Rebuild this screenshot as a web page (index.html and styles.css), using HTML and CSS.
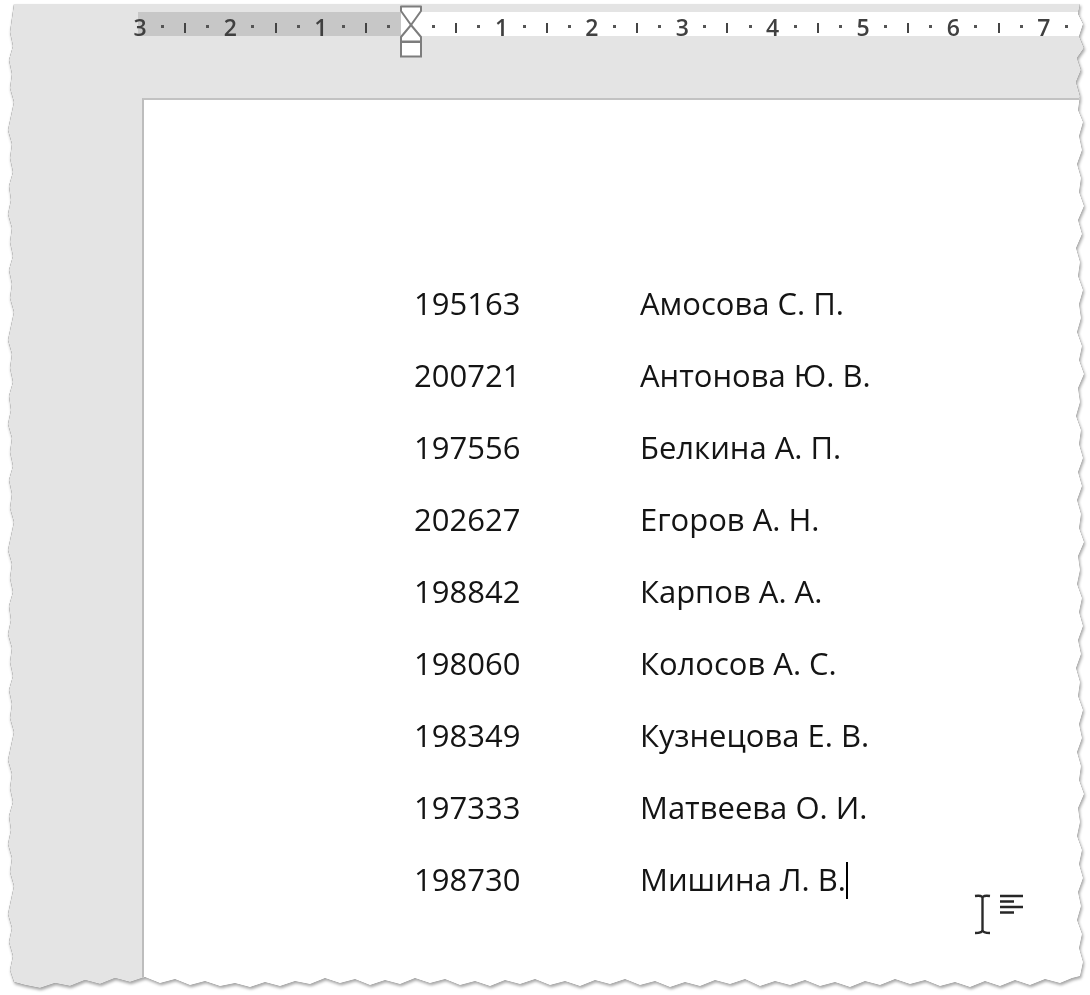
FILE: index.html
```html
<!DOCTYPE html>
<html lang="ru">
<head>
<meta charset="utf-8">
<title>Список</title>
<link rel="stylesheet" href="styles.css">
</head>
<body>
<div class="frame">
  <div class="sheet">
    <div class="ruler">
      <span class="num">3</span><span class="dot"></span><span class="bar"></span><span class="dot"></span>
      <span class="num">2</span><span class="dot"></span><span class="bar"></span><span class="dot"></span>
      <span class="num">1</span><span class="dot"></span><span class="bar"></span><span class="dot"></span>
      <span class="zero"></span><span class="dot"></span><span class="bar"></span><span class="dot"></span>
      <span class="num">1</span><span class="dot"></span><span class="bar"></span><span class="dot"></span>
      <span class="num">2</span><span class="dot"></span><span class="bar"></span><span class="dot"></span>
      <span class="num">3</span><span class="dot"></span><span class="bar"></span><span class="dot"></span>
      <span class="num">4</span><span class="dot"></span><span class="bar"></span><span class="dot"></span>
      <span class="num">5</span><span class="dot"></span><span class="bar"></span><span class="dot"></span>
      <span class="num">6</span><span class="dot"></span><span class="bar"></span><span class="dot"></span>
      <span class="num">7</span><span class="dot"></span>
      <svg class="indent" width="26" height="56" viewBox="0 0 26 56">
        <path d="M2 1.5 H22 V6 L12 20 L2 6 Z" fill="#fff" stroke="#7d7d7d" stroke-width="2" stroke-linejoin="round"/>
        <path d="M12 20 L2 32 V36.5 H22 V32 Z" fill="#fff" stroke="#7d7d7d" stroke-width="2" stroke-linejoin="round"/>
        <rect x="2" y="37" width="20" height="14.5" fill="#fff" stroke="#7d7d7d" stroke-width="2"/>
      </svg>
    </div>
    <div class="page">
      <div class="list">
        <div class="row"><span class="code">195163</span><span class="name">Амосова С. П.</span></div>
        <div class="row"><span class="code">200721</span><span class="name">Антонова Ю. В.</span></div>
        <div class="row"><span class="code">197556</span><span class="name">Белкина А. П.</span></div>
        <div class="row"><span class="code">202627</span><span class="name">Егоров А. Н.</span></div>
        <div class="row"><span class="code">198842</span><span class="name">Карпов А. А.</span></div>
        <div class="row"><span class="code">198060</span><span class="name">Колосов А. С.</span></div>
        <div class="row"><span class="code">198349</span><span class="name">Кузнецова Е. В.</span></div>
        <div class="row"><span class="code">197333</span><span class="name">Матвеева О. И.</span></div>
        <div class="row"><span class="code">198730</span><span class="name">Мишина Л. В.<span class="caret"></span></span></div>
      </div>
      <svg class="pointer" width="54" height="42" viewBox="0 0 54 42">
        <path d="M1 2 Q8.5 1 8.5 4 V36 Q8.5 39 1 39 M16 2 Q8.5 1 8.5 4 M16 39 Q8.5 39 8.5 36" fill="none" stroke="#2a2a2a" stroke-width="2.4"/>
        <g stroke="#262626" stroke-width="2.6">
          <line x1="26" y1="2" x2="49" y2="2"/>
          <line x1="26" y1="7.5" x2="40" y2="7.5"/>
          <line x1="26" y1="13" x2="49" y2="13"/>
          <line x1="26" y1="18.5" x2="40" y2="18.5"/>
        </g>
      </svg>
    </div>
  </div>
</div>
</body>
</html>
```

FILE: styles.css
```css
html, body {
  margin: 0;
  padding: 0;
  background: #ffffff;
}

body {
  width: 1090px;
  height: 995px;
  overflow: hidden;
  font-family: "Open Sans", "Noto Sans", sans-serif;
}

.frame {
  width: 1090px;
  height: 995px;
  filter: drop-shadow(0 0 0.6px #555) drop-shadow(1px 2px 1.5px rgba(0, 0, 0, 0.35));
}

.sheet {
  width: 1090px;
  height: 995px;
  background: #e4e4e4;
  display: flex;
  flex-direction: column;
  clip-path: polygon(
    14px 4px, 1080px 4px,
    1078px 14px, 1083px 24px, 1079px 36px, 1084px 48px, 1077px 58px, 1081px 70px, 1076px 82px, 1080px 96px,
    1078px 110px, 1083px 122px, 1079px 136px, 1082px 150px, 1077px 164px, 1081px 178px, 1079px 192px, 1084px 206px,
    1078px 220px, 1082px 234px, 1076px 248px, 1080px 262px, 1078px 276px, 1083px 290px, 1079px 304px, 1081px 318px,
    1077px 332px, 1082px 346px, 1079px 360px, 1084px 374px, 1078px 388px, 1080px 402px, 1076px 416px, 1081px 430px,
    1079px 444px, 1083px 458px, 1078px 472px, 1082px 486px, 1077px 500px, 1081px 514px, 1079px 528px, 1084px 542px,
    1078px 556px, 1080px 570px, 1077px 584px, 1082px 598px, 1079px 612px, 1083px 626px, 1078px 640px, 1081px 654px,
    1076px 668px, 1080px 682px, 1078px 696px, 1083px 710px, 1079px 724px, 1082px 738px, 1077px 752px, 1081px 766px,
    1079px 780px, 1084px 794px, 1078px 808px, 1080px 822px, 1077px 836px, 1082px 850px, 1079px 864px, 1083px 878px,
    1078px 892px, 1081px 906px, 1077px 920px, 1082px 934px, 1079px 948px, 1083px 962px, 1080px 976px,
    1072px 978px, 1060px 983px, 1045px 979px, 1030px 985px, 1015px 980px, 1000px 986px, 985px 981px, 970px 987px,
    955px 982px, 940px 986px, 925px 980px, 910px 984px, 895px 979px, 880px 985px, 865px 981px, 850px 987px,
    835px 982px, 820px 986px, 805px 980px, 790px 985px, 775px 981px, 760px 986px, 745px 979px, 730px 984px,
    715px 980px, 700px 986px, 685px 982px, 670px 987px, 655px 981px, 640px 985px, 625px 979px, 610px 984px,
    595px 980px, 580px 986px, 565px 981px, 550px 985px, 535px 979px, 520px 984px, 505px 980px, 490px 986px,
    475px 981px, 460px 985px, 445px 979px, 430px 983px, 415px 978px, 400px 984px, 385px 980px, 370px 985px,
    355px 979px, 340px 983px, 325px 978px, 310px 984px, 295px 981px, 280px 986px, 265px 982px, 250px 987px,
    235px 983px, 220px 986px, 205px 981px, 190px 985px, 175px 979px, 160px 983px, 145px 977px, 130px 982px,
    115px 978px, 100px 984px, 85px 980px, 70px 986px, 55px 983px, 40px 988px, 25px 985px, 14px 982px,
    10px 970px, 13px 956px, 9px 942px, 12px 928px, 8px 914px, 11px 900px, 14px 886px, 10px 872px,
    12px 858px, 8px 844px, 11px 830px, 9px 816px, 13px 802px, 10px 788px, 12px 774px, 8px 760px,
    11px 746px, 14px 732px, 10px 718px, 12px 704px, 9px 690px, 13px 676px, 10px 662px, 12px 648px,
    8px 634px, 11px 620px, 9px 606px, 13px 592px, 10px 578px, 12px 564px, 8px 550px, 11px 536px,
    14px 522px, 10px 508px, 12px 494px, 9px 480px, 13px 466px, 10px 452px, 12px 438px, 8px 424px,
    11px 410px, 9px 396px, 13px 382px, 10px 368px, 12px 354px, 8px 340px, 11px 326px, 14px 312px,
    10px 298px, 12px 284px, 9px 270px, 13px 256px, 10px 242px, 12px 228px, 8px 214px, 11px 200px,
    9px 186px, 13px 172px, 10px 158px, 12px 144px, 8px 130px, 11px 116px, 14px 102px, 10px 88px,
    12px 74px, 9px 60px, 13px 46px, 10px 32px, 12px 18px
  );
}

/* Ruler */
.ruler {
  position: relative;
  margin-top: 12px;
  height: 24px;
  display: flex;
  align-items: center;
  padding-left: 128.7px;
  background: linear-gradient(to right,
    transparent 0, transparent 138px,
    #c7c7c7 138px, #c7c7c7 401px,
    #ffffff 401px, #ffffff 100%);
}

.ruler > span {
  flex: 0 0 22.6px;
  width: 22.6px;
  display: flex;
  justify-content: center;
  align-items: center;
  height: 24px;
}

.ruler .num {
  font-family: "Open Sans", "DejaVu Sans", sans-serif;
  font-weight: 600;
  font-size: 23px;
  line-height: 24px;
  color: #404040;
  padding-top: 5px;
  box-sizing: border-box;
}

.ruler .dot::before {
  content: "";
  display: block;
  width: 3px;
  height: 3px;
  margin-top: 4px;
  background: #555;
}

.ruler .bar::before {
  content: "";
  display: block;
  width: 2px;
  height: 10px;
  margin-top: 8px;
  background: #444;
}

.indent {
  position: absolute;
  left: 399px;
  top: -7px;
}

/* Page */
.page {
  position: relative;
  flex: 1;
  margin-top: 62px;
  margin-left: 142px;
  background: #ffffff;
  border-top: 2px solid #c2c2c2;
  border-left: 2px solid #bdbdbd;
  padding-top: 167px;
  padding-left: 270px;
}

.list {
  display: flex;
  flex-direction: column;
}

.row {
  display: grid;
  grid-template-columns: 226px auto;
  height: 72px;
  font-size: 31px;
  line-height: 72px;
  color: #141414;
}

.caret {
  display: inline-block;
  width: 2px;
  height: 37px;
  margin-left: 0;
  background: #000;
  vertical-align: -8px;
}

.pointer {
  position: absolute;
  left: 830px;
  top: 794px;
}
```
